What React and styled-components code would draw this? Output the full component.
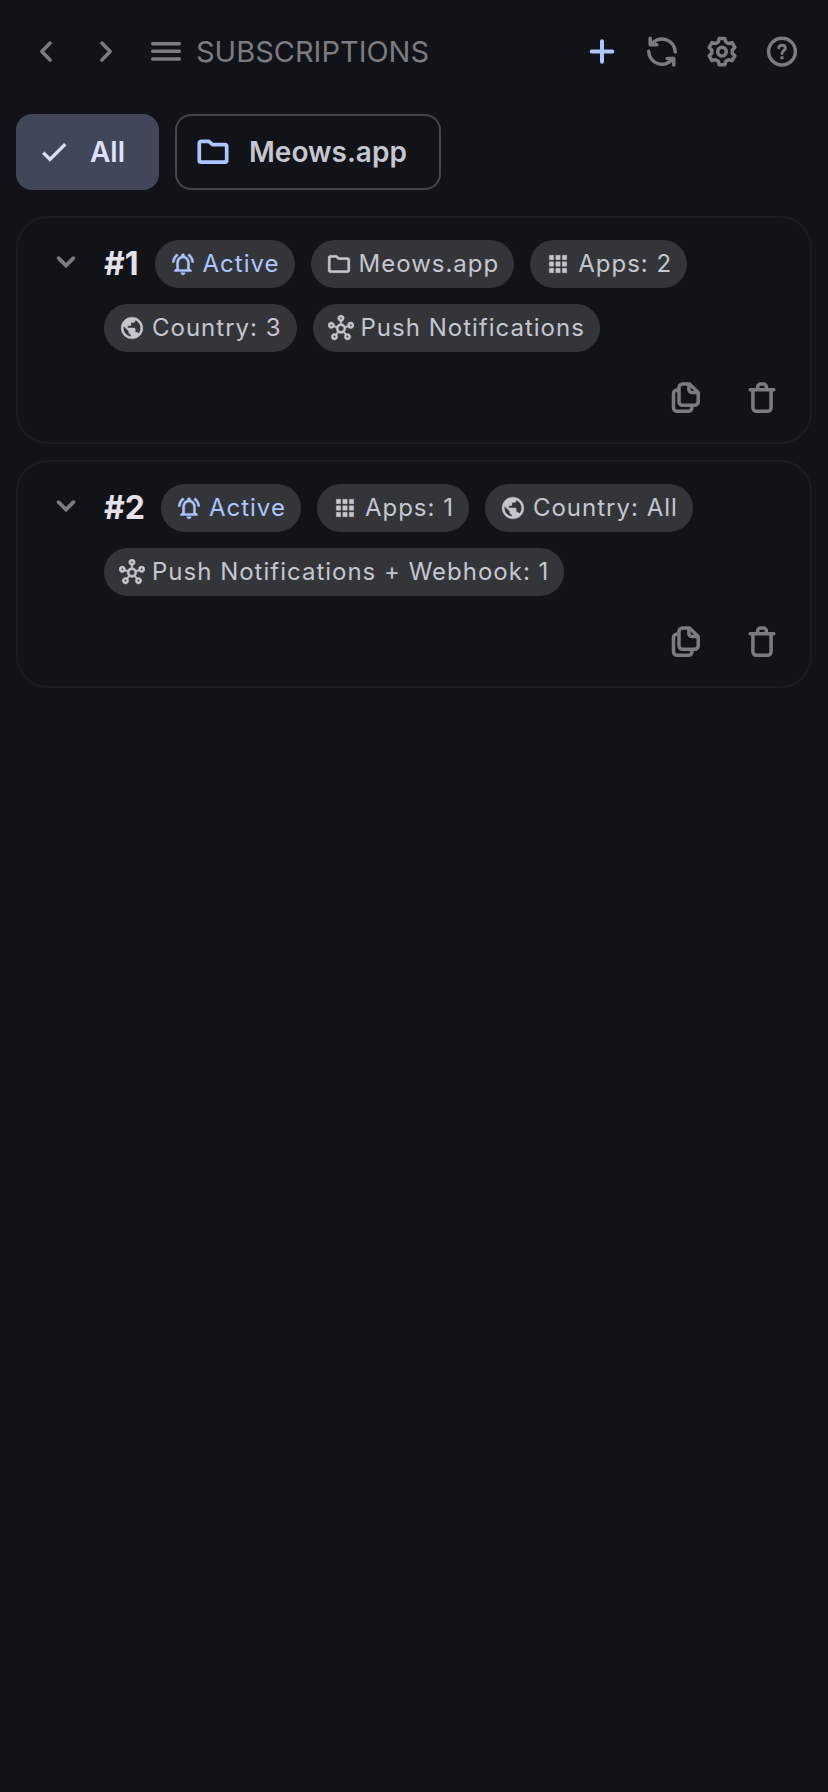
import React, { useState } from "react";
import styled, { createGlobalStyle } from "styled-components";
import {
  MdApps,
  MdCheck,
  MdOutlineFolder,
  MdOutlineHub,
  MdOutlineNotificationsActive,
  MdPublic,
} from "react-icons/md";

const subscriptions = [
  {
    id: 1,
    chips: [
      { icon: MdOutlineNotificationsActive, label: "Active", active: true },
      { icon: MdOutlineFolder, label: "Meows.app" },
      { icon: MdApps, label: "Apps: 2" },
      { icon: MdPublic, label: "Country: 3" },
      { icon: MdOutlineHub, label: "Push Notifications" },
    ],
  },
  {
    id: 2,
    chips: [
      { icon: MdOutlineNotificationsActive, label: "Active", active: true },
      { icon: MdApps, label: "Apps: 1" },
      { icon: MdPublic, label: "Country: All" },
      { icon: MdOutlineHub, label: "Push Notifications + Webhook: 1" },
    ],
  },
];

// six teeth, each one four points: valley, tip, tip, valley
const gearPoints = [0, 60, 120, 180, 240, 300]
  .flatMap((tooth) => [
    [tooth - 21, 10.4],
    [tooth - 12, 13.5],
    [tooth + 12, 13.5],
    [tooth + 21, 10.4],
  ])
  .map(([deg, r]) => {
    const rad = (deg * Math.PI) / 180;
    return `${(16 + r * Math.sin(rad)).toFixed(2)},${(
      15.6 -
      r * Math.cos(rad)
    ).toFixed(2)}`;
  })
  .join(" ");

const BackIcon = () => (
  <LineIcon viewBox="0 0 32 32">
    <path d="M20.2 7L11.8 15.5l8.4 8.5" />
  </LineIcon>
);

const ForwardIcon = () => (
  <LineIcon viewBox="0 0 32 32">
    <path d="M11.8 7l8.4 8.5-8.4 8.5" />
  </LineIcon>
);

const MenuIcon = () => (
  <LineIcon viewBox="0 0 32 32">
    <path d="M2.7 7.7h26.6M2.7 15.3h26.6M2.7 22.9h26.6" />
  </LineIcon>
);

const PlusIcon = () => (
  <LineIcon viewBox="0 0 32 32" $stroke={4}>
    <path d="M16 5.2v20.6M5.7 15.5h20.6" />
  </LineIcon>
);

const RefreshIcon = () => (
  <LineIcon viewBox="0 0 32 32">
    <path d="M4.2 2.2v6.5h6.6" />
    <path d="M5.2 8.5A13.3 13.3 0 0 1 29.3 16" />
    <path d="M27.8 29v-6.5h-6.6" />
    <path d="M26.8 22.7A13.3 13.3 0 0 1 2.7 15.2" />
  </LineIcon>
);

const GearIcon = () => (
  <LineIcon viewBox="0 0 32 32">
    <polygon points={gearPoints} />
    <circle cx="16" cy="15.6" r="4.3" />
  </LineIcon>
);

const HelpIcon = () => (
  <LineIcon viewBox="0 0 32 32">
    <circle cx="16" cy="15.6" r="13.4" />
    <path
      d="M12.8 11.8c.3-1.6 1.500-2.500 3.200-2.500 1.900 0 3.300 1.200 3.300 2.900 0 2.400-3.300 2.500-3.300 5.200"
      strokeWidth="3"
    />
    <path d="M16 21.7h.01" strokeWidth="3.6" />
  </LineIcon>
);

const FolderIcon = () => (
  <LineIcon viewBox="0 0 32 32" $stroke={3.7}>
    <path d="M4.3 5.3h7.5l3.800 3.400h12.100a2 2 0 0 1 2 2v13.500a2 2 0 0 1-2 2H4.300a2 2 0 0 1-2-2V7.300a2 2 0 0 1 2-2z" />
  </LineIcon>
);

const ChevronIcon = () => (
  <LineIcon viewBox="0 0 32 32" $stroke={3.8}>
    <path d="M8.6 12.2l7.4 7.300 7.400-7.300" strokeLinejoin="miter" />
  </LineIcon>
);

const CopyIcon = () => (
  <LineIcon viewBox="0 0 32 32">
    <path d="M12.5 2h7l8.700 8.400v9.400a3.500 3.500 0 0 1-3.500 3.500H12.500A3.500 3.500 0 0 1 9 19.800V5.500A3.500 3.500 0 0 1 12.500 2z" />
    <path d="M18.9 2.600v4.800a3.200 3.200 0 0 0 3.200 3.200h5.400" />
    <path d="M8 8H7a3.500 3.500 0 0 0-3.500 3.500v14.200A3.500 3.500 0 0 0 7 29.200h11.400a3.500 3.500 0 0 0 3.500-3.500v-2" />
  </LineIcon>
);

const TrashIcon = () => (
  <LineIcon viewBox="0 0 32 32">
    <path d="M4.2 7.800h23.600" />
    <path d="M11.6 7.200V5a3 3 0 0 1 3-3h2.800a3 3 0 0 1 3 3v2.200" />
    <path d="M6.900 8.200v17.600a3.400 3.400 0 0 0 3.400 3.400h11.400a3.400 3.400 0 0 0 3.400-3.400V8.200" />
  </LineIcon>
);

const Subscription = ({ id, chips }) => {
  return (
    <Card>
      <CardTop>
        <ExpandButton type="button" aria-label={`Expand #${id}`}>
          <ChevronIcon />
        </ExpandButton>
        <ChipList>
          <CardTitle>#{id}</CardTitle>
          {chips.map(({ icon: Icon, label, active }) => (
            <Chip key={label} $active={active}>
              <Icon />
              {label}
            </Chip>
          ))}
        </ChipList>
      </CardTop>
      <CardActions>
        <IconButton type="button" aria-label="Duplicate">
          <CopyIcon />
        </IconButton>
        <IconButton type="button" aria-label="Delete">
          <TrashIcon />
        </IconButton>
      </CardActions>
    </Card>
  );
};

const App = () => {
  const [filter, setFilter] = useState("all");

  return (
    <>
      <GlobalStyle />
      <Header>
        <IconButton type="button" aria-label="Back">
          <BackIcon />
        </IconButton>
        <IconButton type="button" aria-label="Forward">
          <ForwardIcon />
        </IconButton>
        <IconButton type="button" aria-label="Menu">
          <MenuIcon />
        </IconButton>
        <Title>SUBSCRIPTIONS</Title>
        <IconButton type="button" aria-label="Add" $primary>
          <PlusIcon />
        </IconButton>
        <IconButton type="button" aria-label="Refresh">
          <RefreshIcon />
        </IconButton>
        <IconButton type="button" aria-label="Settings">
          <GearIcon />
        </IconButton>
        <IconButton type="button" aria-label="Help">
          <HelpIcon />
        </IconButton>
      </Header>
      <Filters>
        <FilterButton
          type="button"
          $selected={filter === "all"}
          onClick={() => setFilter("all")}
        >
          <CheckIcon />
          All
        </FilterButton>
        <FilterButton
          type="button"
          $selected={filter === "meows"}
          onClick={() => setFilter("meows")}
        >
          <FolderIcon />
          Meows.app
        </FilterButton>
      </Filters>
      <List>
        {subscriptions.map((item) => (
          <Subscription key={item.id} {...item} />
        ))}
      </List>
    </>
  );
};

const GlobalStyle = createGlobalStyle`
  :root {
    --bg: #121318;
    --primary: #adc6ff;
    --text: #e3e2e9;
    --text-soft: #c5c6d0;
    --muted: #7b7b80;
    --outline: #45464b;
    --card-line: #1b1c20;
    --chip: #343539;
    --selected: #414659;
    --on-selected: #dde1f9;
  }
  * {
    box-sizing: border-box;
    margin: 0;
    padding: 0;
  }
  body {
    background: var(--bg);
    color: var(--text);
    font-family: Inter, "Liberation Sans", sans-serif;
  }
  button {
    font: inherit;
    border: none;
    background: transparent;
    cursor: pointer;
  }
`;

const LineIcon = styled.svg`
  width: 32px;
  height: 32px;
  fill: none;
  stroke: currentColor;
  stroke-width: ${(props) => props.$stroke || 3.5};
  stroke-linecap: round;
  stroke-linejoin: round;
`;

const CheckIcon = styled(MdCheck)`
  width: 32px;
  height: 32px;
  path:not([fill="none"]) {
    stroke: currentColor;
    stroke-width: 0.7;
  }
`;

const Header = styled.header`
  display: flex;
  align-items: center;
  padding: 22px 16px;
`;

const Title = styled.h1`
  flex: 1;
  font-size: 29px;
  line-height: 40px;
  font-weight: 400;
  color: var(--muted);
`;

const IconButton = styled.button`
  display: flex;
  align-items: center;
  justify-content: center;
  width: 60px;
  height: 60px;
  color: ${(props) => (props.$primary ? "var(--primary)" : "var(--muted)")};
`;

const Filters = styled.nav`
  display: flex;
  gap: 16px;
  padding: 10px 16px 0;
`;

const FilterButton = styled.button`
  display: flex;
  align-items: center;
  gap: 20px;
  height: 76px;
  padding: 0 32px 0 20px;
  border: 2px solid
    ${(props) => (props.$selected ? "var(--selected)" : "var(--outline)")};
  border-radius: 16px;
  background: ${(props) =>
    props.$selected ? "var(--selected)" : "transparent"};
  color: ${(props) =>
    props.$selected ? "var(--on-selected)" : "var(--text-soft)"};
  font-size: 28px;
  line-height: 40px;
  font-weight: 600;
  svg {
    color: ${(props) =>
      props.$selected ? "var(--on-selected)" : "var(--primary)"};
  }
`;

const List = styled.main`
  display: grid;
  gap: 16px;
  padding: 26px 16px;
`;

const Card = styled.article`
  border: 2px solid var(--card-line);
  border-radius: 32px;
  padding: 22px 18px 14px;
`;

const CardTop = styled.div`
  display: flex;
  align-items: flex-start;
  gap: 8px;
`;

const ExpandButton = styled(IconButton)`
  height: 44px;
`;

const ChipList = styled.div`
  flex: 1;
  display: flex;
  flex-wrap: wrap;
  align-items: center;
  gap: 16px;
`;

const CardTitle = styled.h2`
  font-size: 32px;
  line-height: 48px;
  font-weight: 700;
`;

const Chip = styled.span`
  display: flex;
  align-items: center;
  gap: 7px;
  height: 48px;
  padding: 0 15px;
  border-radius: 24px;
  background: var(--chip);
  color: ${(props) => (props.$active ? "var(--primary)" : "var(--text-soft)")};
  font-size: 24px;
  line-height: 32px;
  font-weight: 400;
  letter-spacing: 1px;
  white-space: nowrap;
  svg {
    width: 26px;
    height: 26px;
  }
  path:not([fill="none"]) {
    stroke: currentColor;
    stroke-width: 0.4;
  }
`;

const CardActions = styled.div`
  display: flex;
  justify-content: flex-end;
  gap: 16px;
  margin-top: 16px;
`;

export default App;
